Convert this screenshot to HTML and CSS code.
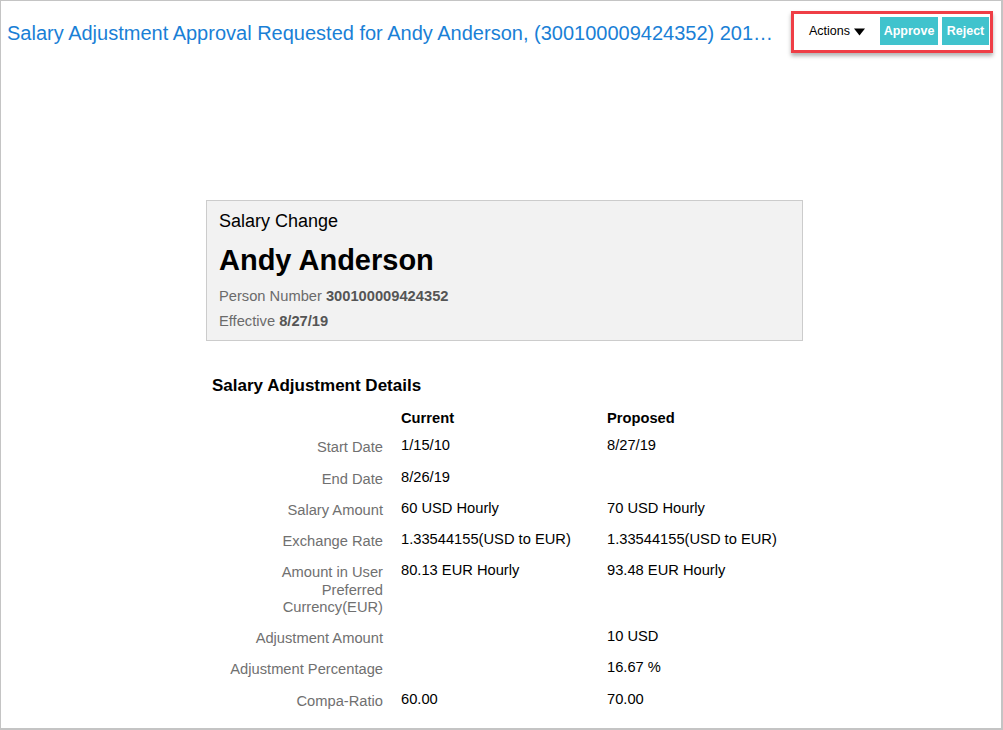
FILE: index.html
```html
<!DOCTYPE html>
<html>
<head>
<meta charset="utf-8">
<link rel="stylesheet" href="styles.css">
</head>
<body>
<div class="frame">
  <div class="header">
    <h1 class="title">Salary Adjustment Approval Requested for Andy Anderson, (300100009424352) 2019-08-27</h1>
    <div class="actions-box">
      <span class="actions">Actions</span>
      <svg class="caret" width="11" height="8" viewBox="0 0 11 8"><path d="M0 0.5 L11 0.5 L5.5 7.5 Z" fill="#000"/></svg>
      <button class="btn btn-approve">Approve</button>
      <button class="btn btn-reject">Reject</button>
    </div>
  </div>
  <div class="content">
    <div class="card">
      <div class="card-sub">Salary Change</div>
      <div class="card-name">Andy Anderson</div>
      <div class="card-meta">Person Number <b>300100009424352</b></div>
      <div class="card-meta">Effective <b>8/27/19</b></div>
    </div>
    <h2 class="section">Salary Adjustment Details</h2>
    <table class="details">
      <thead>
        <tr><th class="lbl"></th><th class="col">Current</th><th class="col">Proposed</th></tr>
      </thead>
      <tbody>
        <tr><td class="lbl">Start Date</td><td>1/15/10</td><td>8/27/19</td></tr>
        <tr><td class="lbl">End Date</td><td>8/26/19</td><td></td></tr>
        <tr><td class="lbl">Salary Amount</td><td>60 USD Hourly</td><td>70 USD Hourly</td></tr>
        <tr><td class="lbl">Exchange Rate</td><td>1.33544155(USD to EUR)</td><td>1.33544155(USD to EUR)</td></tr>
        <tr><td class="lbl">Amount in User Preferred Currency(EUR)</td><td>80.13 EUR Hourly</td><td>93.48 EUR Hourly</td></tr>
        <tr><td class="lbl">Adjustment Amount</td><td></td><td>10 USD</td></tr>
        <tr><td class="lbl">Adjustment Percentage</td><td></td><td>16.67 %</td></tr>
        <tr><td class="lbl">Compa-Ratio</td><td>60.00</td><td>70.00</td></tr>
      </tbody>
    </table>
  </div>
</div>
</body>
</html>
```

FILE: styles.css
```css
html, body {
  margin: 0;
  padding: 0;
  background: #ffffff;
}
body {
  font-family: "Liberation Sans", Arial, sans-serif;
  color: #000;
}
.frame {
  box-sizing: border-box;
  width: 1003px;
  height: 730px;
  border: 1px solid #c4c4c4;
  border-right-width: 2px;
  border-bottom-width: 2px;
  overflow: hidden;
}
.header {
  display: flex;
  align-items: flex-start;
  padding: 10px 8px 0 6px;
}
.title {
  flex: 1;
  min-width: 0;
  margin: 11px 12px 0 0;
  font-size: 20px;
  font-weight: normal;
  color: #1a7fd6;
  white-space: nowrap;
  overflow: hidden;
  text-overflow: ellipsis;
}
.actions-box {
  display: flex;
  align-items: flex-start;
  box-sizing: border-box;
  width: 202px;
  height: 42px;
  border: 3px solid #ef3e46;
  padding: 3px 3px 0 15px;
  box-shadow: 0 3px 4px rgba(0,0,0,0.3);
}
.actions {
  font-size: 12.5px;
  line-height: 28px;
  color: #000;
  white-space: nowrap;
}
.caret {
  margin: 11px 15px 0 4px;
  flex: none;
}
.btn {
  height: 28px;
  border: none;
  background: #40c3cd;
  color: #fff;
  font-family: "Liberation Sans", Arial, sans-serif;
  font-weight: bold;
  font-size: 12.5px;
  padding: 0;
  margin: 0;
  flex: none;
}
.btn-approve {
  width: 58px;
  margin-right: 4px;
}
.btn-reject {
  width: 47px;
}
.content {
  padding: 147px 0 0 205px;
}
.card {
  box-sizing: border-box;
  width: 597px;
  height: 141px;
  background: #f2f2f2;
  border: 1px solid #cccccc;
  padding: 8px 12px;
}
.card-sub {
  font-size: 18px;
  line-height: 24px;
}
.card-name {
  font-size: 29px;
  font-weight: bold;
  line-height: 36px;
  margin-top: 9px;
  margin-bottom: 6px;
}
.card-meta {
  font-size: 14.7px;
  color: #6b6b6b;
  line-height: 25px;
}
.card-meta b {
  color: #555;
}
.section {
  font-size: 17px;
  font-weight: bold;
  margin: 34px 0 0 6px;
  line-height: 22px;
}
.details {
  border-collapse: collapse;
  font-size: 14.7px;
  margin: 13px 0 0 -1px;
}
.details th, .details td {
  padding: 7px 0 7px 0;
  line-height: 17.25px;
  vertical-align: top;
  text-align: left;
}
.details th {
  padding: 0 0 3px 0;
  font-weight: bold;
}
.details .lbl {
  width: 160px;
  padding-left: 18px;
  padding-right: 18px;
  padding-top: 9px;
  padding-bottom: 5px;
  text-align: right;
  color: #707070;
}
.details td:nth-child(2), .details th:nth-child(2) {
  width: 206px;
}
```
